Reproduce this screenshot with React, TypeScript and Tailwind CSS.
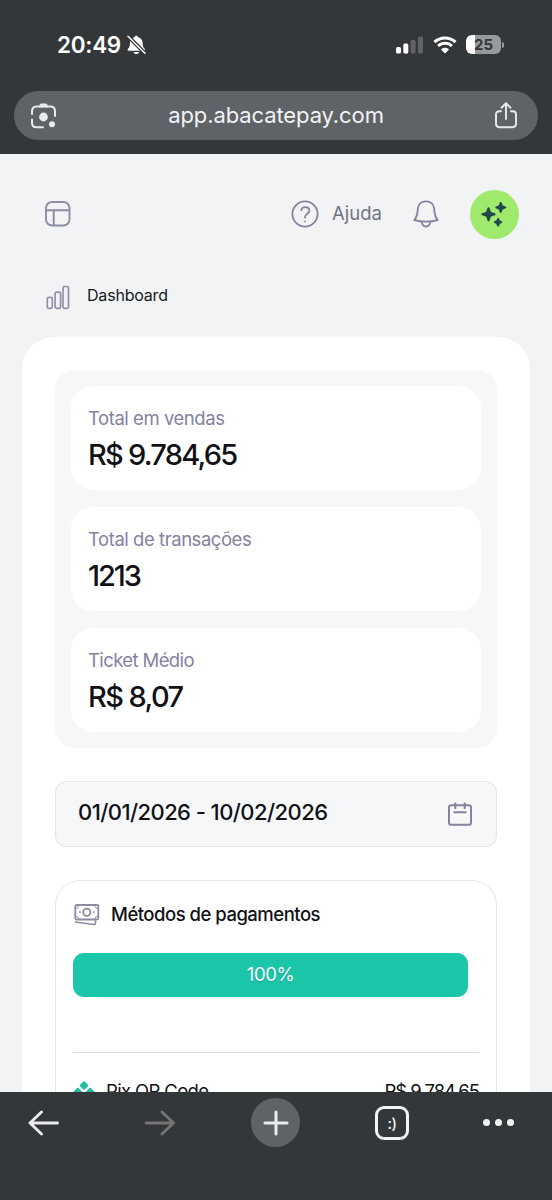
import React from 'react';

const stats = [
  { label: 'Total em vendas', value: 'R$ 9.784,65', labelClass: 'tracking-[-0.45px]', valueClass: 'tracking-[-1.75px]' },
  { label: 'Total de transações', value: '1213', labelClass: 'tracking-[-0.450px]', valueClass: 'tracking-[-2.1px]' },
  { label: 'Ticket Médio', value: 'R$ 8,07', labelClass: 'tracking-[-0.6px]', valueClass: 'tracking-[-1.6px]' },
];

function StatusBar() {
  return (
    <div className="flex h-[91px] items-center justify-between pr-[48px] pb-[2px] pl-[57px]">
      <div className="flex items-center gap-[6px]">
        <span className="text-[22.5px] leading-7 font-semibold tracking-[-0.3px] text-white">20:49</span>
        <svg width="19" height="20" viewBox="0 0 19 20" fill="none">
          <path
            d="M9.300 0.800c-1 0-1.700.7-1.800 1.500C4.500 3.100 3 5.400 2.900 8.400c-.1 3-.6 4-1.900 5.300-.8.900-.5 2 .8 2h15c1.300 0 1.600-1.100.8-2-1.300-1.300-1.800-2.300-1.900-5.300-.1-3-1.500-5.300-4.600-6.100-.1-.8-.8-1.500-1.800-1.500z"
            fill="#fff"
          />
          <path d="M6.500 16.900h5.600c-.4 1.400-1.500 2.200-2.800 2.200s-2.400-.8-2.800-2.200z" fill="#fff" />
          <path d="M0.500 0.700L18.500 18.700" stroke="#34373a" strokeWidth="3.800" />
          <path d="M1 1.200L18 18.200" stroke="#fff" strokeWidth="1.500" strokeLinecap="round" />
        </svg>
      </div>
      <div className="flex items-center">
        <svg width="28" height="18" viewBox="0 0 28 18">
          <rect x="0" y="11" width="5" height="6.500" rx="1.500" fill="#fff" />
          <rect x="7.300" y="7.500" width="5" height="10" rx="1.500" fill="#fff" />
          <rect x="14.600" y="4" width="5" height="13.500" rx="1.500" fill="#606366" />
          <rect x="22" y="0.500" width="5" height="17" rx="1.500" fill="#606366" />
        </svg>
        <svg className="ml-[9px]" width="24" height="18" viewBox="0 0 24 18" fill="none">
          <path d="M1.500 6.200C7.300.6 16.700.6 22.500 6.200" stroke="#fff" strokeWidth="3" />
          <path d="M5.100 10c3.900-3.700 9.900-3.700 13.800 0" stroke="#fff" strokeWidth="2.800" />
          <path d="M8 13.400c2.200-2.200 5.800-2.200 8 0L12 17.400z" fill="#fff" />
        </svg>
        <div className="ml-[9px] flex items-center gap-[1px]">
          <div className="flex h-[19px] w-[35px] items-center justify-center rounded-[6px] bg-linear-to-r from-white from-27% to-[#98999b] to-27% text-[15px] leading-none font-bold text-[#34373a]">
            25
          </div>
          <div className="h-[6px] w-[2px] rounded-r-full bg-[#98999b]" />
        </div>
      </div>
    </div>
  );
}

function AddressBar() {
  return (
    <div className="mx-[14px] flex h-[49px] items-center justify-between rounded-full bg-[#5f6367] pr-[20px] pl-[16px]">
      <svg width="27" height="27" viewBox="0 0 27 27" fill="none">
        <path
          d="M2 12V9.200C2 6.300 3.700 4.600 6.600 4.600h13.800c2.900 0 4.600 1.700 4.600 4.600V14M2 17.500v3.200C2 23.600 3.700 25.300 6.600 25.300H13"
          stroke="#e8eaed"
          strokeWidth="2"
          strokeLinecap="round"
        />
        <path d="M8.700 5.200L10 2.300c.3-.6.700-.8 1.300-.8h4.400c.6 0 1 .2 1.300.8l1.300 2.900z" fill="#e8eaed" />
        <circle cx="13.500" cy="15" r="4.400" fill="#e8eaed" />
        <circle cx="22" cy="22.300" r="3" fill="#e8eaed" />
      </svg>
      <span className="pb-[2px] pl-[1px] text-[22px] leading-7 tracking-[-0.1px] text-[#f1f3f4]">app.abacatepay.com</span>
      <svg width="24" height="27" viewBox="0 0 24 27" fill="none" stroke="#e8eaed" strokeWidth="1.900" strokeLinecap="round">
        <path d="M7 9.300H5.200C3.200 9.300 2 10.600 2 12.600v9.200C2 24 3.200 25.200 5.400 25.200h13.200c2.200 0 3.400-1.200 3.400-3.400v-9.200c0-2-1.200-3.300-3.200-3.300H17" />
        <path d="M12 17V1.500M7.500 5.700L12 1.300l4.500 4.400" strokeLinejoin="round" />
      </svg>
    </div>
  );
}

function Header() {
  return (
    <header className="flex h-[120px] items-center justify-between pr-[33px] pl-[44px]">
      <svg className="mb-px" width="27" height="27" viewBox="0 0 27 27" fill="none" stroke="#8c8da5" strokeWidth="1.900">
        <rect x="2" y="2" width="23.500" height="23.500" rx="6" />
        <path d="M2 10.200h23.500M9.700 10.200v15.300" />
      </svg>
      <div className="flex items-center">
        <svg width="28" height="28" viewBox="0 0 28 28" fill="none" stroke="#85849e" strokeWidth="1.800" strokeLinecap="round">
          <circle cx="14" cy="14" r="12.600" />
          <path d="M10.300 10.400c.2-2 1.700-3.200 4-3.200 2.500 0 4.100 1.300 4.100 3.400 0 1.700-1 2.500-2.400 3.500-1.400 1-2 1.700-2 3.500" />
          <circle cx="14" cy="21.500" r="0.600" fill="#85849e" strokeWidth="1" />
        </svg>
        <span className="ml-[13px] pb-[2px] text-[18.500px] leading-6 text-[#737386]">Ajuda</span>
        <svg className="ml-[31px]" width="26" height="28" viewBox="0 0 26 28" fill="none" stroke="#8584a0" strokeWidth="1.800" strokeLinejoin="round">
          <path d="M13 1.300c-4.700 0-7.900 3.100-8.200 7.600-.2 5-.9 8.100-3.500 11.300 7.500 1.900 15.900 1.900 23.400 0-2.600-3.200-3.300-6.300-3.500-11.300C20.900 4.400 17.700 1.300 13 1.300z" />
          <path d="M8.700 21.600c.3 2.800 1.900 4.900 4.300 4.900s4-2.100 4.300-4.900" />
        </svg>
        <div className="ml-[31px] flex h-[49px] w-[49px] items-center justify-center rounded-full bg-[#9fea6c]">
          <svg className="mr-[2px]" width="26" height="26" viewBox="0 0 26 26" fill="#204a49" stroke="#204a49" strokeWidth="2" strokeLinejoin="round">
            <path d="M7.500 7.200l1.700 4.500 4.400 1.600-4.400 1.600-1.700 4.500-1.600-4.500-4.500-1.600 4.500-1.600z" />
            <path d="M19.700 2l1.300 3.200 3.300 1.200-3.300 1.300-1.300 3.200-1.200-3.200-3.200-1.300 3.200-1.200z" />
            <path d="M17.100 18l1 2.200 2.200 1-2.200 1-1 2.300-1-2.300-2.200-1 2.200-1z" />
          </svg>
        </div>
      </div>
    </header>
  );
}

function PaymentMethods() {
  return (
    <section className="mt-[33px] h-[330px] rounded-[25px] border-[1.500px] border-[#e4e5ed] px-[17px] pt-[20px]">
      <div className="flex items-center gap-[11px]">
        <svg className="mt-px" width="27" height="24" viewBox="0 0 27 24" fill="none" stroke="#8b8ba3" strokeWidth="1.800">
          <rect x="2.300" y="3" width="23" height="14.500" rx="1.500" />
          <path d="M2.500 6.500c2 0 3-1.200 3.200-3.200M22 3.300c.2 2 1.200 3.200 3.200 3.200M2.500 14.200c2 0 3 1.100 3.200 3.200M22 17.400c.2-2.100 1.200-3.200 3.200-3.200" strokeWidth="1" />
          <circle cx="13.800" cy="10.200" r="3.600" />
          <path d="M6.200 10.200h1.500M20 10.200h1.500" />
          <path d="M2 20l19 2.500c1 .1 1.500-.4 1.500-1.400v-2.800" strokeWidth="1.500" />
        </svg>
        <h2 className="text-[18.500px] leading-6 font-medium tracking-[-0.5px] text-[#111116]">Métodos de pagamentos</h2>
      </div>
      <div className="mt-[27px] mr-[11px] flex h-[44px] items-center justify-center rounded-[11px] bg-[#1bc6a9] pb-[2px] text-[18.500px] leading-6 tracking-[-0.4px] text-white text-shadow-sm">
        100%
      </div>
      <div className="mt-[55px] border-t border-[#dddee5] pt-[25px]">
        <div className="flex items-center justify-between text-[18.500px] leading-6 text-[#111116]">
          <div className="flex items-center gap-[11px]">
            <svg className="mt-[3px]" width="22" height="22" viewBox="0 0 22 22" fill="#20bfa2">
              <rect x="7.700" y="1.200" width="6.600" height="6.600" rx="1" transform="rotate(45 11 4.500)" />
              <rect x="1.500" y="7.700" width="6.600" height="6.600" rx="1" transform="rotate(45 4.800 11)" />
              <rect x="13.900" y="7.700" width="6.600" height="6.600" rx="1" transform="rotate(45 17.200 11)" />
              <rect x="7.700" y="14.200" width="6.600" height="6.600" rx="1" transform="rotate(45 11 17.500)" />
            </svg>
            <span className="tracking-[-0.65px]">Pix QR Code</span>
          </div>
          <span className="tracking-[-1px]">R$ 9.784,65</span>
        </div>
      </div>
    </section>
  );
}

function BrowserToolbar() {
  return (
    <nav className="flex h-[108px] shrink-0 items-start bg-[#34373a] pt-[6px] pl-[28px]">
      <svg className="mt-[12px]" width="32" height="26" viewBox="0 0 32 26" fill="none" stroke="#e8eaed" strokeWidth="2.900" strokeLinecap="round" strokeLinejoin="round">
        <path d="M29.500 13H2M13.500 2L2 13l11.500 11" />
      </svg>
      <svg className="mt-[12px] ml-[84px]" width="32" height="26" viewBox="0 0 32 26" fill="none" stroke="#737476" strokeWidth="2.900" strokeLinecap="round" strokeLinejoin="round">
        <path d="M2 13h27.500M18 2l11.500 11L18 24" />
      </svg>
      <div className="ml-[75px] flex h-[49px] w-[49px] items-center justify-center rounded-full bg-[#5f6367]">
        <svg width="26" height="26" viewBox="0 0 26 26" fill="none" stroke="#e8eaed" strokeWidth="3" strokeLinecap="round">
          <path d="M13 2v22M2 13h22" />
        </svg>
      </div>
      <div className="mt-[8px] ml-[75px] flex h-[34px] w-[34px] items-center justify-center rounded-[9px] border-[3px] border-[#f1f3f4] text-[15px] leading-none font-medium tracking-[-0.5px] text-[#f1f3f4]">
        <span className="pt-px">:)</span>
      </div>
      <div className="mt-[21px] ml-[74px] flex gap-[5px]">
        <span className="h-[7px] w-[7px] rounded-full bg-[#f1f3f4]" />
        <span className="h-[7px] w-[7px] rounded-full bg-[#f1f3f4]" />
        <span className="h-[7px] w-[7px] rounded-full bg-[#f1f3f4]" />
      </div>
    </nav>
  );
}

export default function App() {
  return (
    <div className="flex h-[1200px] w-[552px] flex-col overflow-hidden bg-[#f2f3f5] font-['Inter',sans-serif]">
      <div className="h-[154px] shrink-0 bg-[#34373a]">
        <StatusBar />
        <AddressBar />
      </div>

      <main className="min-h-0 flex-1 overflow-hidden">
        <Header />
        <div className="flex h-[63px] items-start gap-[16px] pt-[9px] pl-[46px]">
          <svg className="mt-[2px]" width="25" height="25" viewBox="0 0 25 25" fill="none" stroke="#9291aa" strokeWidth="1.700">
            <rect x="1.300" y="12.300" width="5" height="11" rx="1.500" />
            <rect x="9.100" y="7.200" width="5.500" height="16.100" rx="1.500" />
            <rect x="17" y="1.500" width="5.500" height="21.800" rx="1.500" />
          </svg>
          <h1 className="text-[16px] leading-6 tracking-[-0.2px] text-[#18181d]">Dashboard</h1>
        </div>

        <div className="mx-[22px] rounded-t-[32px] bg-white px-[33px] pt-[33px]">
          <section className="flex flex-col gap-[17px] rounded-[20px] bg-[#f6f7f9] p-4">
            {stats.map((stat) => (
              <div key={stat.label} className="h-[104px] rounded-[22px] bg-white px-[17px] pt-[20px]">
                <p className={`text-[18.500px] leading-6 text-[#85819f] ${stat.labelClass}`}>{stat.label}</p>
                <p className={`mt-[7px] text-[29px] leading-9 font-medium text-[#111116] ${stat.valueClass}`}>{stat.value}</p>
              </div>
            ))}
          </section>

          <div className="mt-[33px] flex h-[66px] items-center justify-between rounded-[11px] border-[1.500px] border-[#e2e6ee] bg-[#f6f7f9] pr-[23px] pl-[22px]">
            <span className="pb-[4px] text-[22px] leading-7 font-medium tracking-[-0.57px] text-[#111116]">01/01/2026 - 10/02/2026</span>
            <svg width="26" height="26" viewBox="0 0 26 26" fill="none" stroke="#86829f" strokeWidth="2">
              <rect x="2" y="4.200" width="22" height="19.500" rx="2" />
              <path d="M8.300 1.500V8M17.700 1.500V8M6.500 11.300h13" />
            </svg>
          </div>

          <PaymentMethods />
        </div>
      </main>

      <BrowserToolbar />
    </div>
  );
}
